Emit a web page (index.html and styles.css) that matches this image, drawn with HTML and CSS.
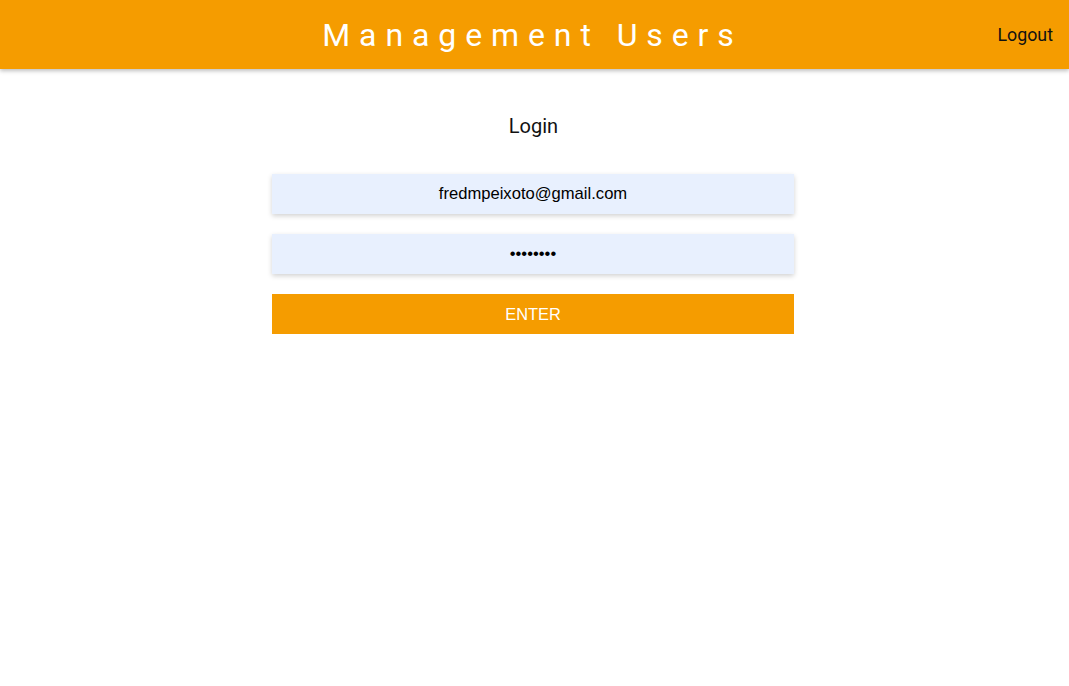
FILE: index.html
```html
<!DOCTYPE html>
<html>
<head>
<meta charset="utf-8">
<link rel="stylesheet" href="styles.css">
</head>
<body>
<header class="topbar">
  <h1 class="title">Management Users</h1>
  <a class="logout" href="#">Logout</a>
</header>
<main class="content">
  <h2 class="login-title">Login</h2>
  <form class="login-form">
    <input class="field" type="email" value="fredmpeixoto@gmail.com">
    <input class="field" type="password" value="12345678">
    <button class="enter" type="button">ENTER</button>
  </form>
</main>
</body>
</html>
```
FILE: styles.css
```css
html, body {
  margin: 0;
  padding: 0;
  background: #fff;
}
body {
  font-family: Roboto, "Liberation Sans", sans-serif;
}
.topbar {
  position: relative;
  height: 69px;
  background: #f59c00;
  display: flex;
  align-items: center;
  justify-content: center;
  box-shadow: 0 2px 4px rgba(0,0,0,0.25);
}
.title {
  margin: 0 4px 0 0;
  font-family: Roboto, sans-serif;
  font-weight: 400;
  font-size: 32px;
  letter-spacing: 8.9px;
  color: #fff;
}
.logout {
  position: absolute;
  right: 16px;
  top: 24px;
  font-size: 17.8px;
  color: #111;
  text-decoration: none;
  font-family: Roboto, sans-serif;
}
.content {
  display: flex;
  flex-direction: column;
  align-items: center;
  padding-top: 44px;
}
.login-title {
  margin: 0 2px 0 0;
  font-weight: 400;
  font-size: 20px;
  color: #111;
  line-height: 26px;
}
.login-form {
  margin-top: 35px;
  width: 522px;
  display: flex;
  flex-direction: column;
  gap: 20px;
  margin-right: 3px;
}
.field {
  box-sizing: border-box;
  height: 40px;
  width: 100%;
  border: none;
  outline: none;
  background: #e8f0fe;
  text-align: center;
  font-family: "Liberation Sans", Arial, sans-serif;
  font-size: 16.6px;
  color: #000;
  box-shadow: 0 2px 5px rgba(0,0,0,0.18);
}
.enter {
  height: 40px;
  width: 100%;
  border: none;
  background: #f59c00;
  color: #fff;
  font-family: "Liberation Sans", Arial, sans-serif;
  font-size: 16.4px;
}
```
